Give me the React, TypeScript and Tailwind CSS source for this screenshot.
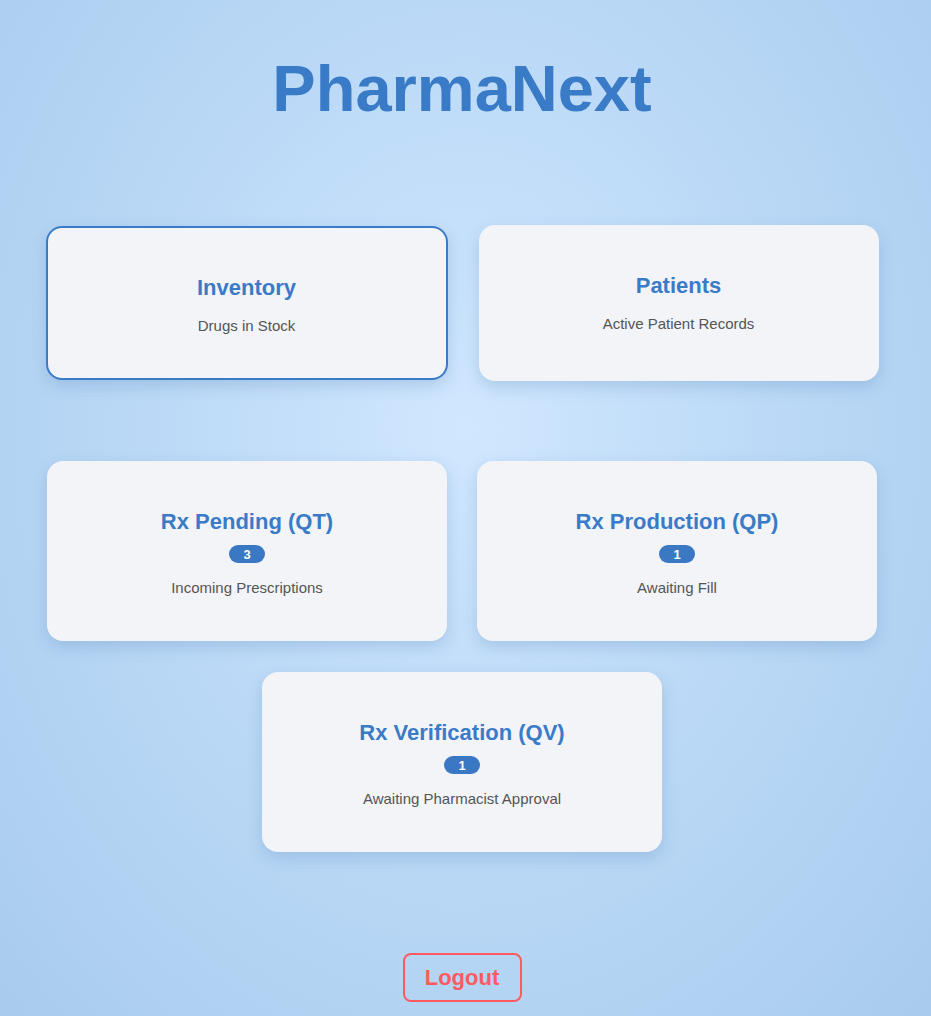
import React from 'react';

interface CardProps {
  title: string;
  subtitle: string;
  count?: number;
  active?: boolean;
}

const Card: React.FC<CardProps> = ({ title, subtitle, count, active }) => {
  return (
    <div
      className={`flex flex-col items-center justify-center rounded-[16px] bg-[#f2f4f8] shadow-[0_6px_16px_rgba(60,110,170,0.22)] ${
        count !== undefined
          ? 'h-[180px] w-[400px] pt-[4px]'
          : active
          ? 'h-[154px] w-[402px] border-2 border-[#3a7bc8] pt-[4px]'
          : 'h-[156px] w-[400px]'
      }`}
    >
      <h2 className="text-[22px] leading-[26px] font-bold text-[#3a7bc8]">{title}</h2>
      {count !== undefined ? (
        <span className="mt-[10px] flex h-[18px] min-w-[36px] items-center justify-center rounded-full bg-[#3a78c4] px-3 text-[13px] leading-none font-bold text-white">
          {count}
        </span>
      ) : null}
      <p className={`${count !== undefined ? 'mt-[16px]' : 'mt-[16px]'} text-[15px] leading-[18px] text-[#555]`}>{subtitle}</p>
    </div>
  );
};

export default function App() {
  return (
    <div
      className="flex min-h-[1016px] flex-col items-center pr-[7px] bg-[radial-gradient(ellipse_at_50%_42%,#d1e7fe_0%,#bcdaf7_45%,#a8cbee_100%)]"
      style={{ fontFamily: '"Liberation Sans", Arial, sans-serif' }}
    >
      <h1 className="mt-[49px] text-[65px] leading-[80px] font-bold text-[#3a7bc8]">PharmaNext</h1>

      <div className="mt-[96px] flex items-start gap-[31px]">
        <div className="mt-[1px]">
          <Card title="Inventory" subtitle="Drugs in Stock" active />
        </div>
        <Card title="Patients" subtitle="Active Patient Records" />
      </div>

      <div className="mt-[80px] flex gap-[30px]">
        <Card title="Rx Pending (QT)" count={3} subtitle="Incoming Prescriptions" />
        <Card title="Rx Production (QP)" count={1} subtitle="Awaiting Fill" />
      </div>

      <div className="mt-[31px]">
        <Card title="Rx Verification (QV)" count={1} subtitle="Awaiting Pharmacist Approval" />
      </div>

      <button className="mt-[101px] h-[49px] w-[119px] rounded-[8px] border-2 border-[#ff5a5f] text-[22px] font-bold text-[#ff5a5f]">
        Logout
      </button>
    </div>
  );
}
